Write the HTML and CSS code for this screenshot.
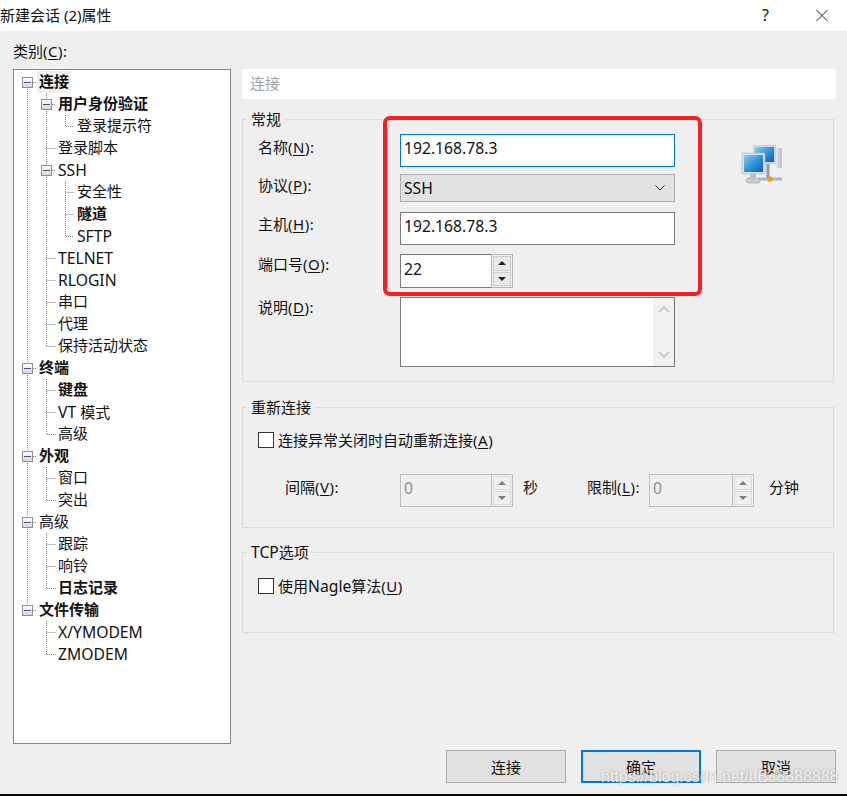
FILE: index.html
```html
<!DOCTYPE html>
<html lang="zh-CN">
<head>
<meta charset="utf-8">
<title>新建会话 (2)属性</title>
<link rel="stylesheet" href="styles.css">
</head>
<body>
<div class="window">
  <header class="titlebar">
    <span class="title">新建会话 (2)属性</span>
    <span class="help">?</span>
    <svg class="close" width="14" height="14" viewBox="0 0 14 14"><path d="M1 1L13 13M13 1L1 13" stroke="#111" stroke-width="1" fill="none"/></svg>
  </header>
  <main class="body">
    <section class="left">
      <div class="cat-label">类别<span class="m">(<u>C</u>):</span></div>
      <div class="tree">
        <svg class="tree-lines" width="216" height="673" viewBox="14 70 216 673">
          <path class="dots" d="M27.5 89V605 M33 82.5H37 M46.5 93V346 M52 104.5H56 M65.5 115V126.5H74 M46.5 148.5H56 M52 170.5H56 M65.5 181V236.5H74 M65.5 192.5H74 M65.5 214.5H74 M46.5 258.5H56 M46.5 280.5H56 M46.5 302.5H56 M46.5 324.5H56 M46.5 346.5H56 M33 368.5H37 M46.5 379V434.5H56 M46.5 390.5H56 M46.5 412.5H56 M33 456.5H37 M46.5 467V500.5H56 M46.5 478.5H56 M33 522.5H37 M46.5 533V588.5H56 M46.5 544.5H56 M46.5 566.5H56 M33 610.5H37 M46.5 621V654.5H56 M46.5 632.5H56"/>
        </svg>
        <div class="row l0"><i class="box"></i><span class="sel b">连接</span></div>
        <div class="row l1"><i class="box"></i><span class="b">用户身份验证</span></div>
        <div class="row l2"><span>登录提示符</span></div>
        <div class="row l1"><span>登录脚本</span></div>
        <div class="row l1"><i class="box"></i><span class="lat">SSH</span></div>
        <div class="row l2"><span>安全性</span></div>
        <div class="row l2"><span class="b">隧道</span></div>
        <div class="row l2"><span class="lat">SFTP</span></div>
        <div class="row l1"><span class="lat">TELNET</span></div>
        <div class="row l1"><span class="lat">RLOGIN</span></div>
        <div class="row l1"><span>串口</span></div>
        <div class="row l1"><span>代理</span></div>
        <div class="row l1"><span>保持活动状态</span></div>
        <div class="row l0"><i class="box"></i><span class="b">终端</span></div>
        <div class="row l1"><span class="b">键盘</span></div>
        <div class="row l1"><span class="mix"><span class="lat">VT </span>模式</span></div>
        <div class="row l1"><span>高级</span></div>
        <div class="row l0"><i class="box"></i><span class="b">外观</span></div>
        <div class="row l1"><span>窗口</span></div>
        <div class="row l1"><span>突出</span></div>
        <div class="row l0"><i class="box"></i><span>高级</span></div>
        <div class="row l1"><span>跟踪</span></div>
        <div class="row l1"><span>响铃</span></div>
        <div class="row l1"><span class="b">日志记录</span></div>
        <div class="row l0"><i class="box"></i><span class="b">文件传输</span></div>
        <div class="row l1"><span class="lat">X/YMODEM</span></div>
        <div class="row l1"><span class="lat">ZMODEM</span></div>
      </div>
    </section>
    <section class="right">
      <div class="page-head">连接</div>

      <div class="group g-general">
        <div class="legend">常规</div>
        <div class="form">
          <label class="lab p3">名称<span class="m">(<u>N</u>):</span></label>
          <div class="field focus h33 val">192.168.78.3</div>
          <svg class="net-icon" width="42" height="42" viewBox="0 0 42 42">
            <defs>
              <linearGradient id="scr" x1="0" y1="0" x2="1" y2="1"><stop offset="0" stop-color="#8fd0f2"/><stop offset=".55" stop-color="#2a8fd8"/><stop offset="1" stop-color="#1c55b0"/></linearGradient>
              <linearGradient id="case" x1="0" y1="0" x2="1" y2="0"><stop offset="0" stop-color="#f2f5f7"/><stop offset="1" stop-color="#b4c0ca"/></linearGradient>
            </defs>
            <rect x="33" y="4" width="8" height="20" fill="url(#case)"/>
            <rect x="12" y="1" width="23" height="19" rx="1" fill="#c9d6df"/>
            <rect x="14" y="3" width="19" height="15" fill="url(#scr)"/>
            <path d="M18 35H41" stroke="#a9b6bf" stroke-width="3"/>
            <path d="M27 20V34" stroke="#8f9ca6" stroke-width="3"/>
            <rect x="5" y="34" width="14" height="5" rx="2.5" fill="#c3ced6" stroke="#8d9ba6" stroke-width=".6"/>
            <rect x="9" y="29" width="6" height="6" fill="#b3c0ca"/>
            <rect x="1" y="9" width="23" height="21" rx="1" fill="#d7e1e8" stroke="#a6b4bf" stroke-width=".6"/>
            <rect x="3" y="11" width="19" height="17" fill="url(#scr)"/>
            <circle cx="29" cy="35" r="2.8" fill="#f29a11"/>
          </svg>

          <label class="lab p1">协议<span class="m">(<u>P</u>):</span></label>
          <div class="field combo">
            <span class="lat">SSH</span>
            <svg width="10" height="6" viewBox="0 0 10 6"><path d="M.5 .5L5 5L9.5 .5" stroke="#333" fill="none"/></svg>
          </div>

          <label class="lab p2">主机<span class="m">(<u>H</u>):</span></label>
          <div class="field h33 val">192.168.78.3</div>

          <label class="lab p0">端口号<span class="m">(<u>O</u>):</span></label>
          <div class="spin w113 h34">
            <div class="spin-val val">22</div>
            <div class="spin-btns"><i class="btn up"></i><i class="btn dn"></i></div>
          </div>

          <label class="lab p0">说明<span class="m">(<u>D</u>):</span></label>
          <div class="field memo">
            <div class="sbar">
              <svg width="12" height="9" viewBox="0 0 12 9"><path d="M1 7L6 2L11 7" stroke="#c8c8c8" stroke-width="2" fill="none"/></svg>
              <svg width="12" height="9" viewBox="0 0 12 9"><path d="M1 2L6 7L11 2" stroke="#c8c8c8" stroke-width="2" fill="none"/></svg>
            </div>
          </div>
        </div>
      </div>

      <div class="group g-reconnect">
        <div class="legend">重新连接</div>
        <div class="check first"><i class="cb"></i><span>连接异常关闭时自动重新连接<span class="m">(<u>A</u>)</span></span></div>
        <div class="timing">
          <span class="t-lab1">间隔<span class="m">(<u>V</u>):</span></span>
          <div class="spin disabled w113 h33">
            <div class="spin-val val">0</div>
            <div class="spin-btns"><i class="btn up"></i><i class="btn dn"></i></div>
          </div>
          <span class="t-unit1">秒</span>
          <span class="t-lab2">限制<span class="m">(<u>L</u>):</span></span>
          <div class="spin disabled w105 h33">
            <div class="spin-val val">0</div>
            <div class="spin-btns"><i class="btn up"></i><i class="btn dn"></i></div>
          </div>
          <span class="t-unit2">分钟</span>
        </div>
      </div>

      <div class="group g-tcp">
        <div class="legend"><span class="lat">TCP</span>选项</div>
        <div class="check tcp"><i class="cb"></i><span>使用<span class="lat">Nagle</span>算法<span class="m">(<u>U</u>)</span></span></div>
      </div>

      <div class="actions">
        <button class="act">连接</button>
        <button class="act default">确定</button>
        <button class="act">取消</button>
      </div>
    </section>
  </main>
  <div class="edge"></div>
  <div class="redbox"></div>
  <div class="watermark">https://blog.csdn.net/LBJ8888888</div>
</div>
</body>
</html>
```

FILE: styles.css
```css
* { box-sizing: border-box; }
html, body { margin: 0; padding: 0; }
body {
  width: 847px;
  height: 796px;
  overflow: hidden;
  font: 15px/20px "Noto Sans", "Noto Sans CJK SC", sans-serif;
  color: #111;
  background: #efefef;
}
.window { position: relative; display: flex; flex-direction: column; width: 847px; height: 796px; }
u { text-underline-offset: 2px; text-decoration-thickness: 1px; }
.lat { font-size: 15.7px; }
.m { letter-spacing: .5px; }

/* title bar */
.titlebar { display: flex; align-items: center; height: 31px; background: #fff; flex: none; }
.title { flex: 1; padding-bottom: 1px; }
.help { margin-right: 46px; font-size: 16px; padding-bottom: 2px; }
.close { margin-right: 18px; padding-bottom: 1px; }

/* layout */
.body { flex: 1; display: grid; grid-template-columns: 218px 594px; column-gap: 11px; padding-left: 13px; min-height: 0; }
.edge { height: 2px; background: #000; flex: none; }

/* tree */
.cat-label { margin-top: 10px; margin-bottom: 8px; }
.tree { position: relative; height: 675px; background: #fff; border: 1px solid #828790; padding-top: 1px; }
.tree-lines { position: absolute; left: 0; top: 0; }
.dots { fill: none; stroke: #808080; stroke-width: 1; stroke-dasharray: 1 1; }
.row { position: relative; display: flex; align-items: center; height: 22px; white-space: nowrap; padding-bottom: 2px; }
.row > .lat, .row > .mix { padding-top: 2px; }
.l0 { padding-left: 25px; }
.l1 { padding-left: 44px; }
.l2 { padding-left: 63px; }
.box {
  position: relative;
  flex: none;
  width: 11px;
  height: 11px;
  margin-left: -17px;
  margin-right: 6px;
  margin-bottom: -2px;
  border: 1px solid #8f8f8f;
  background: linear-gradient(#fff, #d6d6d6);
}
.box::after { content: ""; position: absolute; left: 1px; right: 1px; top: 4px; height: 1px; background: #3f4f80; }
.b { font-weight: 700; }
.sel { background: #f0f0f0; box-shadow: 0 2px 0 #f0f0f0; margin-left: -2px; padding: 0 2px; }

/* right column */
.right { display: flex; flex-direction: column; padding-top: 38px; }
.page-head { height: 30px; background: #fff; color: #a0a0a0; line-height: 28px; padding-left: 8px; flex: none; }
.group { width: 592px; border: 1px solid #dcdcdc; flex: none; }
.legend { width: fit-content; margin: -11px 0 0 4px; padding: 0 4px; background: #efefef; white-space: nowrap; }
.g-general { height: 263px; margin-top: 20px; }
.g-reconnect { height: 121px; margin-top: 25px; }
.g-tcp { height: 81px; margin-top: 24px; }

/* form */
.form { display: grid; grid-template-columns: 142px 275px 1fr; padding: 5px 0 0 15px; align-items: start; }
.lab { display: block; grid-column: 1; white-space: nowrap; }
.p0 { padding-top: 0; }
.p1 { padding-top: 1px; }
.p2 { padding-top: 2px; }
.p3 { padding-top: 3px; }
.field { grid-column: 2; background: #fff; border: 1px solid #7a7a7a; padding: 0 3px; display: flex; align-items: center; }
.val { font-size: 15.7px; padding-bottom: 5px; }
.h33 { height: 33px; }
.h34 { height: 34px; }
.focus { border-color: #0078d7; }
.form > .field, .form > .spin { margin-bottom: 9px; }
.form > .spin { grid-column: 2; }
.form > .focus { margin-bottom: 7px; }
.form > .combo { margin-bottom: 10px; }
.combo { height: 28px; background: #e1e1e1; border-color: #adadad; justify-content: space-between; padding-right: 9px; }
.form > .memo { height: 70px; justify-content: flex-end; align-items: stretch; padding: 0; margin-bottom: 0; }
.sbar { width: 21px; background: #f0f0f0; display: flex; flex-direction: column; justify-content: space-between; align-items: center; padding: 7px 0; }
.net-icon { grid-row: 1 / span 3; grid-column: 3; margin: 10px 0 0 66px; filter: blur(.4px); }

/* spin */
.spin { display: flex; }
.w113 { width: 113px; }
.w105 { width: 105px; }
.spin-val { flex: 1; background: #fff; border: 1px solid #7a7a7a; border-right: 0; padding: 0 3px 5px; display: flex; align-items: center; }
.spin-btns { width: 22px; border: 1px solid #b4b4b4; display: flex; flex-direction: column; gap: 1px; padding: 1px; background: #efefef; }
.btn { flex: 1; border: 1px solid #cfcfcf; background: #e9e9e9; display: flex; align-items: center; justify-content: center; }
.up::after, .dn::after { content: ""; width: 0; height: 0; border-left: 4px solid transparent; border-right: 4px solid transparent; }
.up::after { border-bottom: 4px solid #222; }
.dn::after { border-top: 4px solid #222; }
.disabled .spin-val { background: #efefef; border-color: #bfbfbf; color: #8d8d8d; }
.disabled .spin-btns { border-color: #bfbfbf; }
.disabled .btn { background: #efefef; border-color: #dcdcdc; }
.disabled .up::after { border-bottom-color: #7f7f7f; }
.disabled .dn::after { border-top-color: #7f7f7f; }

/* checks */
.check { display: flex; align-items: center; gap: 4px; padding-left: 15px; height: 20px; }
.check.first { margin-top: 13px; }
.check.tcp { margin-top: 14px; }
.cb { width: 16px; height: 16px; flex: none; background: #fff; border: 1px solid #333; }

/* timing */
.timing { display: flex; align-items: flex-start; margin-top: 24px; padding-left: 42px; white-space: nowrap; }
.timing > span { padding-top: 3px; }
.t-lab1 { width: 115px; }
.t-unit1 { width: 15px; margin-left: 10px; }
.t-lab2 { width: 62px; margin-left: 49px; }
.t-unit2 { margin-left: 15px; }

/* buttons */
.actions { display: flex; justify-content: flex-end; gap: 15px; margin-top: 117px; flex: none; }
.act { width: 120px; height: 33px; padding: 0; background: #e1e1e1; border: 1px solid #adadad; font: inherit; color: #111; }
.default { border: 2px solid #0078d7; }

/* overlays */
.redbox { position: absolute; left: 383px; top: 116px; width: 319px; height: 180px; border: 4px solid #ff1c1c; border-radius: 7px; }
.watermark {
  position: absolute;
  left: 601px;
  top: 767px;
  font: 16px/20px "Liberation Sans", sans-serif;
  color: rgba(255, 255, 255, .8);
  text-shadow: 0 0 2px rgba(90, 90, 90, .55);
  white-space: nowrap;
}
```
